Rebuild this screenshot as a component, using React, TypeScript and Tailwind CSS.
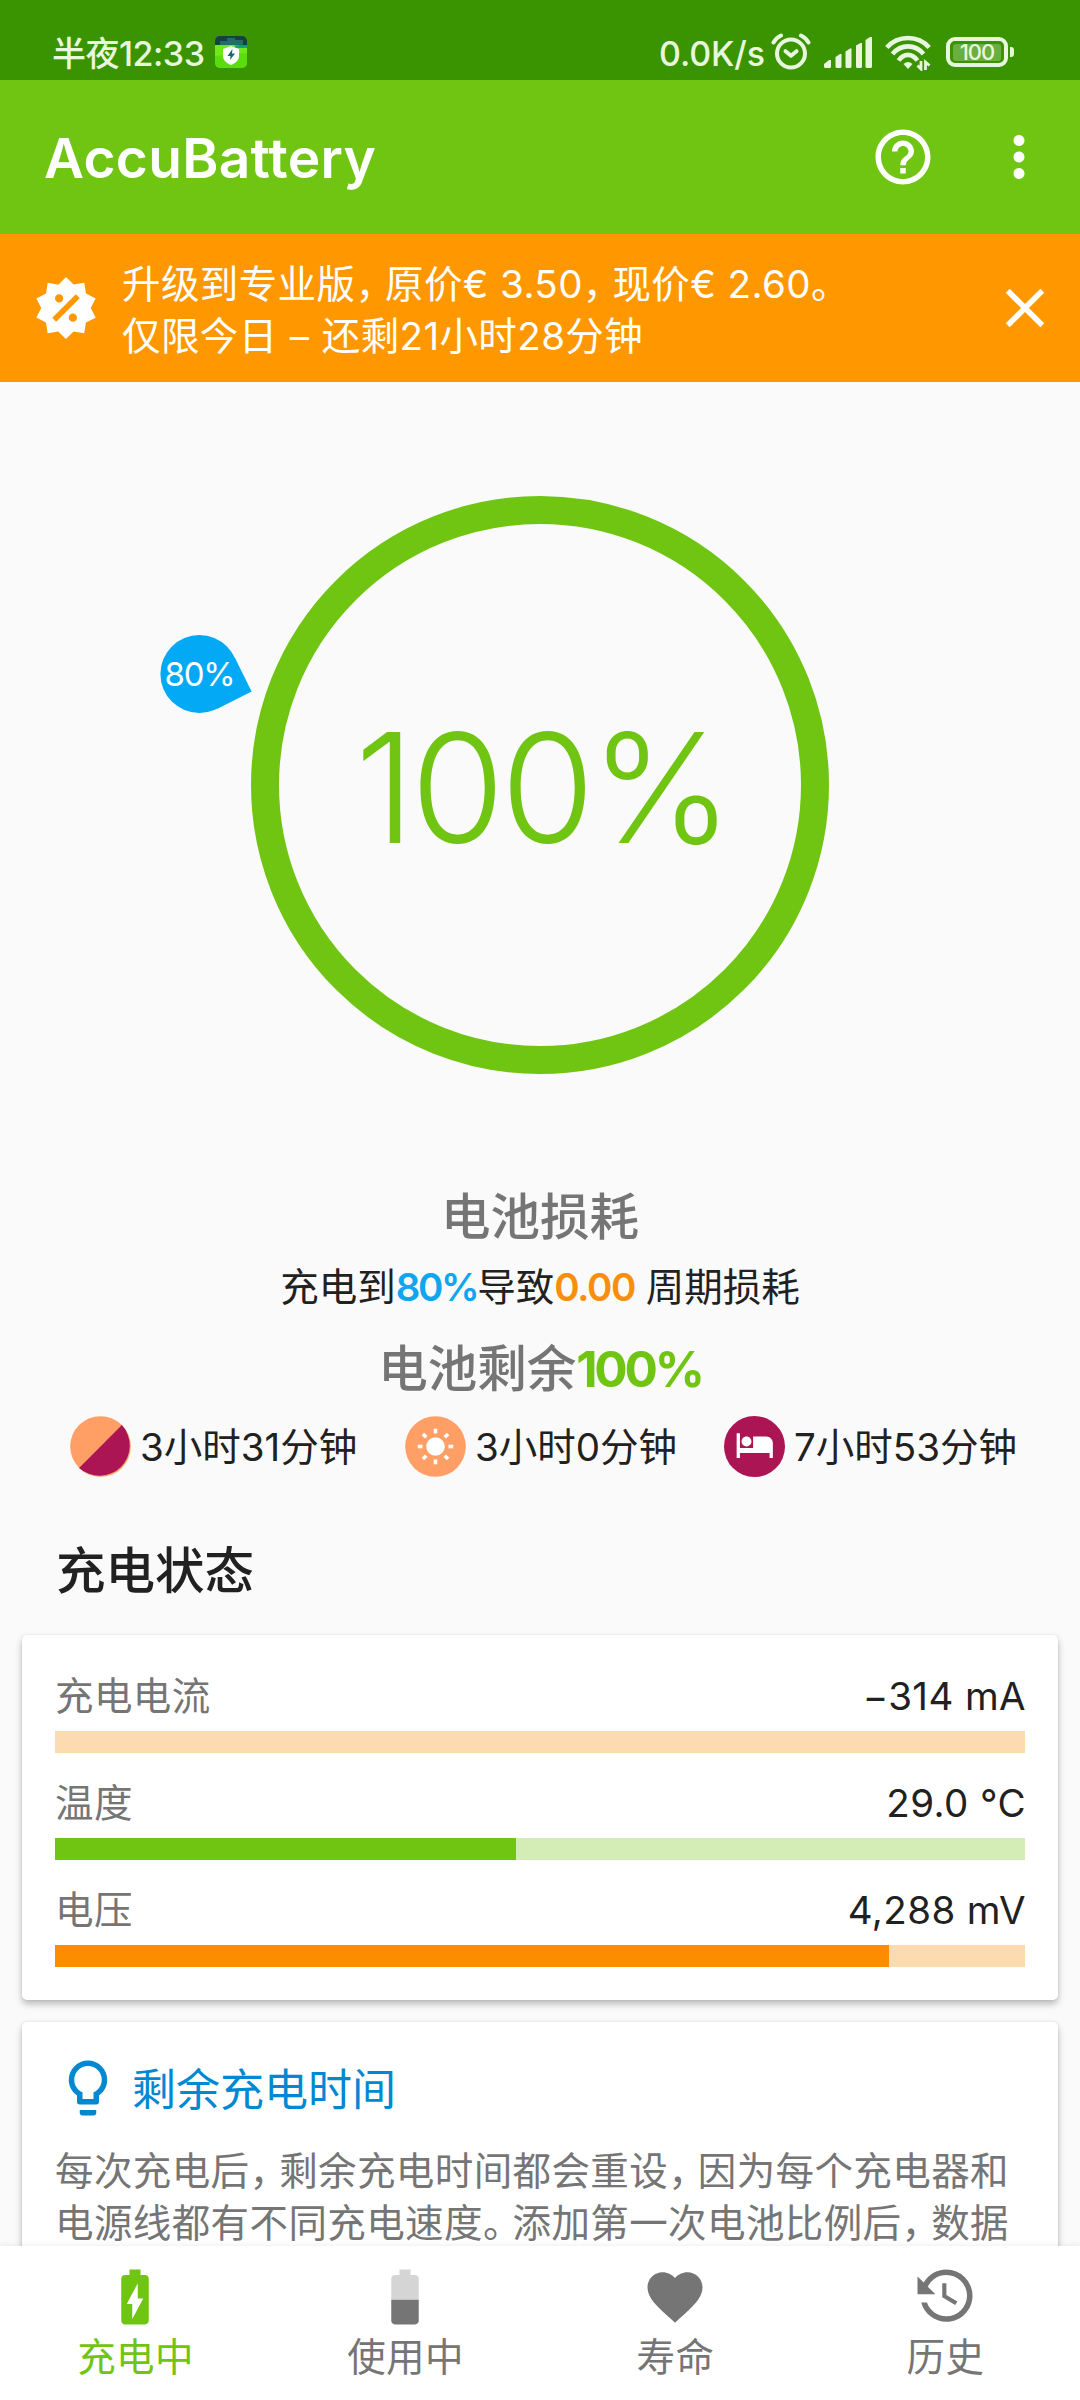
import type { ReactNode } from "react";
import { MdBatteryChargingFull, MdClose, MdFavorite, MdHelpOutline, MdHotel, MdMoreVert } from "react-icons/md";

const STATS = [
  { label: "充电电流", value: "−314 mA", fill: 0, track: "bg-[#fddbb0]", bar: "bg-[#fd8c00]" },
  { label: "温度", value: "29.0 °C", fill: 461, track: "bg-[#d4edb7]", bar: "bg-[#70c412]" },
  { label: "电压", value: "4,288 mV", fill: 834, track: "bg-[#fddbb0]", bar: "bg-[#fd8c00]" },
];

export default function App() {
  return (
    <div className="flex h-[2400px] w-[1080px] flex-col overflow-hidden bg-[#fafafa] font-['Inter','Noto_Sans_CJK_SC',sans-serif] text-[38.5px] tracking-[0.4px] text-[#212121]">
      <StatusBar />
      <AppBar />
      <PromoBanner />
      <main className="flex min-h-0 flex-1 flex-col overflow-hidden">
        <ChargeRing />
        <Summary />
        <h2 className="mt-[22px] flex h-[131px] shrink-0 items-center pl-[56px] pt-[3px] text-[49.5px] font-medium tracking-normal">
          充电状态
        </h2>
        <StatsCard />
        <TipCard />
      </main>
      <BottomNav />
    </div>
  );
}

function StatusBar() {
  return (
    <div className="flex h-20 shrink-0 items-start bg-[#3a9300] pl-[52px] text-[34px] font-medium leading-[34px] tracking-[-0.5px] text-[#e8f6dd]">
      <span className="mt-[37px] w-[163px] whitespace-nowrap">半夜12:33</span>
      <ShieldIcon />
      <span className="ml-[412px] mt-[37px] w-[112px] whitespace-nowrap tracking-[-0.1px]">0.0K/s</span>
      <AlarmIcon />
      <SignalIcon />
      <WifiIcon />
      <div className="relative ml-[14px] mt-[37px] flex h-[30px] w-[62px] items-center justify-center rounded-[9px] border-4 border-[#e8f6dd]">
        <div className="flex h-[17px] w-12 items-center justify-center rounded-[3px] bg-white/25 text-[22px] leading-[17px] tracking-[-1px]">
          100
        </div>
        <span className="absolute -right-[10px] top-[6px] h-[10px] w-1 rounded-r-[3px] bg-[#e8f6dd]" />
      </div>
    </div>
  );
}

function ShieldIcon() {
  return (
    <svg className="mt-9 h-8 w-8" viewBox="0 0 32 32">
      <rect width="32" height="32" rx="5" fill="#17413f" />
      <path d="M5 5h7V2h8v2h8v6H5z" fill="#1f6f68" />
      <path d="M0 9h20l12 2v16a5 5 0 0 1-5 5H5a5 5 0 0 1-5-5z" fill="#6fe81a" />
      <path d="M20 9.500l12-.5v3H20z" fill="#14a07a" />
      <path d="M0 20l32-3v10a5 5 0 0 1-5 5H5a5 5 0 0 1-5-5z" fill="#5bdc0c" />
      <path d="M16 10l8 3v7c0 4-3 7-8 9-5-2-8-5-8-9v-7z" fill="#fff" />
      <path d="M17.500 13l-5 7h3l-.5 4 5-6.500h-3z" fill="#14696b" />
    </svg>
  );
}

function AlarmIcon() {
  return (
    <svg className="mt-8 h-10 w-10" viewBox="0 0 40 40" fill="none" stroke="#e8f6dd" strokeLinecap="round">
      <circle cx="20" cy="21.500" r="14" strokeWidth="4" />
      <path d="M14.500 19.200l5.500 4.600 5.500-4.600" strokeWidth="4" strokeLinejoin="round" />
      <path d="M2.500 10.500Q5 6 10 3.500M37.500 10.500Q35 6 30 3.500" strokeWidth="4" />
    </svg>
  );
}

function SignalIcon() {
  return (
    <svg className="ml-[13px] mt-9 h-[33px] w-[49px]" viewBox="0 0 49 33" fill="#e8f6dd">
      <path d="M0 28l5-4h2v6.500q0 1.500-1.500 1.500h-4Q0 32 0 30.500zM11.500 21l4.500-3h1.500v12.500q0 1.500-1.500 1.500h-3q-1.500 0-1.500-1.500zM21.500 15.500l4.500-3h1.500v18q0 1.500-1.500 1.500h-3q-1.500 0-1.500-1.500zM32 9.500L36.500 7H38v23.500q0 1.500-1.500 1.500h-3Q32 32 32 30.500zM41.500 4L46 1h2v29.500q0 1.500-1.500 1.500H43q-1.500 0-1.500-1.500z" />
    </svg>
  );
}

function WifiIcon() {
  return (
    <svg className="ml-[12px] mt-[34px] h-[37px] w-[47px]" viewBox="0 0 47 37" fill="none" stroke="#e8f6dd">
      <path d="M1.800 13.500C13 .8 33 .8 44.200 13.500" strokeWidth="4.600" />
      <path d="M7.500 20C16 9.800 30 9.800 38.500 20" strokeWidth="4.600" />
      <path d="M13.500 26.500C19 19 27 19 32.500 26.500" strokeWidth="4.600" />
      <path d="M18.500 30q4.500-4 9 0L23 35z" fill="#e8f6dd" stroke="none" />
      <path d="M36 27v8l-3.500-3.500M40.500 36v-8l4 3.500" strokeWidth="2.800" />
    </svg>
  );
}

function AppBar() {
  return (
    <header className="flex h-[154px] shrink-0 items-center bg-[#70c412] pl-11 text-white">
      <h1 className="flex-1 pt-[3px] text-[55px] font-semibold tracking-[0.3px]">AccuBattery</h1>
      <MdHelpOutline className="size-[66px]" />
      <MdMoreVert className="ml-[50px] mr-7 size-[66px]" />
    </header>
  );
}

function PromoBanner() {
  return (
    <section className="flex h-[148px] shrink-0 items-center bg-[#ff9800] pl-[33px] pr-[22px] text-white">
      <svg className="size-[66px]" viewBox="0 0 24 24" fill="currentColor">
        <path d="M18.650 2.850L19.260 6.710L22.770 8.500L21 12L22.780 15.500L19.240 17.290L18.630 21.150L14.740 20.540L11.970 23.300L9.190 20.500L5.330 21.140L4.710 17.250L1.220 15.470L3 11.970L1.230 8.500L4.740 6.690L5.350 2.860L9.220 3.500L12 .69L14.770 3.460L18.650 2.850M9.500 7A1.500 1.500 0 0 0 8 8.500A1.500 1.500 0 0 0 9.500 10A1.500 1.500 0 0 0 11 8.500A1.500 1.500 0 0 0 9.500 7M14.500 14A1.500 1.500 0 0 0 13 15.500A1.500 1.500 0 0 0 14.500 17A1.500 1.500 0 0 0 16 15.500A1.500 1.500 0 0 0 14.500 14M8.410 17L17 8.410L15.590 7L7 15.590L8.410 17Z" />
      </svg>
      <p className="ml-[23px] flex-1 whitespace-nowrap pt-[3px] leading-[52px]">
        升级到专业版<Mark>，</Mark>原价€ 3.50<Mark>，</Mark>现价€ 2.60。
        <br />
        仅限今日 <span className="mx-px">–</span> 还剩21小时28分钟
      </p>
      <MdClose className="size-[66px]" />
    </section>
  );
}

// full-width punctuation, set a little narrower than its em box
function Mark({ children }: { children: ReactNode }) {
  return <span className="tracking-[-8.9px]">{children}</span>;
}

function ChargeRing() {
  return (
    <section className="relative flex h-[805px] shrink-0 justify-center pt-[114px] text-[#70c412]">
      <div className="flex size-[578px] items-center justify-center rounded-full border-[28px] border-[#70c412]">
        <span className="pl-1 pt-[6px] text-[152px] font-light leading-none tracking-[-4px]">100%</span>
      </div>
      <div className="absolute left-[160px] top-[253px] h-[78px] w-[92px]">
        <svg className="absolute inset-0" width="92" height="78" viewBox="0 0 92 78" fill="#04a9f5">
          <circle cx="39.400" cy="39" r="39" />
          <path d="M75 23L91.600 56.600L57 74L39 39z" />
        </svg>
        <span className="relative flex h-full w-[79px] items-center justify-center pt-px text-[33px] tracking-[-1.2px] text-white">
          80%
        </span>
      </div>
    </section>
  );
}

function Summary() {
  return (
    <section className="flex shrink-0 flex-col whitespace-nowrap">
      <h2 className="flex h-[60px] items-center justify-center pt-px text-[49.5px] font-medium tracking-normal text-[#757575]">
        电池损耗
      </h2>
      <p className="flex h-[81px] items-center justify-center whitespace-pre pt-px tracking-normal">
        充电到<b className="font-semibold tracking-[-2.4px] text-[#0fa5ef]">80%</b>导致
        <b className="font-semibold tracking-[-1.4px] text-[#f88f0c]">0.00</b> 周期损耗
      </p>
      <h2 className="flex h-[82px] items-center justify-center pt-px text-[49.5px] font-medium tracking-normal text-[#757575]">
        电池剩余<b className="font-bold tracking-[-3.2px] text-[#70c412]">100%</b>
      </h2>
      <div className="grid h-[72px] grid-cols-[335px_319px_1fr] items-center pl-[70px] tracking-normal">
        <Remaining text="3小时31分钟">
          <svg className="size-[61px]" viewBox="0 0 61 61">
            <circle cx="30.500" cy="30.500" r="30.300" fill="#ff9f66" />
            <path d="M51.900 9.100A30.300 30.300 0 0 1 9.100 51.900z" fill="#ab1553" />
          </svg>
        </Remaining>
        <Remaining text="3小时0分钟">
          <svg className="size-[61px]" viewBox="0 0 61 61">
            <circle cx="30.500" cy="30.500" r="30.300" fill="#ff9f66" />
            <circle cx="30.500" cy="30.500" r="9.300" fill="#fff" />
            {[0, 45, 90, 135, 180, 225, 270, 315].map((a) => (
              <rect key={a} x="28.700" y="12.700" width="3.600" height="4.800" fill="#fff" transform={`rotate(${a} 30.5 30.5)`} />
            ))}
          </svg>
        </Remaining>
        <Remaining text="7小时53分钟">
          <div className="flex size-[61px] items-center justify-center rounded-full bg-[#ab1553] text-white">
            <MdHotel className="mb-[2px] size-[39.5px]" />
          </div>
        </Remaining>
      </div>
    </section>
  );
}

function Remaining({ text, children }: { text: string; children: ReactNode }) {
  return (
    <div className="flex items-center gap-[9px]">
      {children}
      <span className="pt-[3px]">{text}</span>
    </div>
  );
}

function StatsCard() {
  return (
    <section className="mx-[22px] flex h-[365px] shrink-0 flex-col gap-[13px] rounded-[5px] bg-white px-[33px] pt-6 shadow-[0_4px_7px_rgba(0,0,0,0.26),0_0_3px_rgba(0,0,0,0.08)]">
      {STATS.map((s) => (
        <div key={s.label}>
          <div className="flex h-[72px] items-center justify-between pt-[3px]">
            <span className="text-[#757575]">{s.label}</span>
            <span className="-mr-px">{s.value}</span>
          </div>
          <div className={`h-[22px] ${s.track}`}>
            <div className={`h-full ${s.bar}`} style={{ width: s.fill }} />
          </div>
        </div>
      ))}
    </section>
  );
}

function TipCard() {
  return (
    <section className="mx-[22px] mt-[22px] h-[400px] shrink-0 rounded-[5px] bg-white px-[33px] pt-[33px] shadow-[0_4px_7px_rgba(0,0,0,0.26),0_0_3px_rgba(0,0,0,0.08)]">
      <div className="flex h-[66px] items-center gap-[11px] text-[#0288d1]">
        <svg className="size-[66px]" viewBox="0 0 24 24" fill="currentColor">
          <path d="M12,2A7,7 0 0,1 19,9C19,11.380 17.810,13.470 16,14.740V17A1,1 0 0,1 15,18H9A1,1 0 0,1 8,17V14.740C6.190,13.470 5,11.380 5,9A7,7 0 0,1 12,2M9,21V20H15V21A1,1 0 0,1 14,22H10A1,1 0 0,1 9,21M12,4A5,5 0 0,0 7,9C7,11.050 8.230,12.810 10,13.580V16H14V13.580C15.770,12.810 17,11.050 17,9A5,5 0 0,0 12,4Z" />
        </svg>
        <h3 className="pt-[3px] text-[44px] tracking-normal">剩余充电时间</h3>
      </div>
      <p className="mt-6 whitespace-nowrap leading-[52px] text-[#757575]">
        每次充电后<Mark>，</Mark>剩余充电时间都会重设<Mark>，</Mark>因为每个充电器和
        <br />
        电源线都有不同充电速度<Mark>。</Mark>添加第一次电池比例后<Mark>，</Mark>数据
      </p>
    </section>
  );
}

function BottomNav() {
  return (
    <nav className="relative grid h-[154px] shrink-0 grid-cols-4 bg-white text-[#757575] shadow-[0_-1px_6px_rgba(0,0,0,0.07)]">
      <NavItem label="充电中" active>
        <MdBatteryChargingFull className="size-[66px]" />
      </NavItem>
      <NavItem label="使用中">
        <svg className="size-[66px]" viewBox="0 0 24 24" fill="currentColor">
          <path fillOpacity=".3" d="M17 5.330C17 4.600 16.400 4 15.670 4H14V2h-4v2H8.330C7.600 4 7 4.600 7 5.330V13h10V5.330z" />
          <path d="M7 13v7.670C7 21.400 7.600 22 8.330 22h7.330c.74 0 1.340-.6 1.340-1.330V13H7z" />
        </svg>
      </NavItem>
      <NavItem label="寿命">
        <MdFavorite className="size-[66px]" />
      </NavItem>
      <NavItem label="历史">
        <svg className="size-[66px]" viewBox="0 0 24 24" fill="currentColor">
          <path d="M11,7V12.110L15.710,14.900L16.500,13.620L12.500,11.250V7M12.500,2C8.970,2 5.910,3.920 4.270,6.770L2,4.500V11H8.500L5.750,8.250C6.960,5.730 9.500,4 12.500,4A7.500,7.500 0 0,1 20,11.500A7.500,7.500 0 0,1 12.500,19C9.230,19 6.470,16.910 5.440,14H3.340C4.440,18.030 8.110,21 12.500,21C17.740,21 22,16.750 22,11.500A9.500,9.500 0 0,0 12.500,2Z" />
        </svg>
      </NavItem>
    </nav>
  );
}

function NavItem({ label, active, children }: { label: string; active?: boolean; children: ReactNode }) {
  return (
    <div className={`flex flex-col items-center pt-[18px] ${active ? "text-[#70c412]" : ""}`}>
      {children}
      <span className="pl-px leading-[55px]">{label}</span>
    </div>
  );
}
